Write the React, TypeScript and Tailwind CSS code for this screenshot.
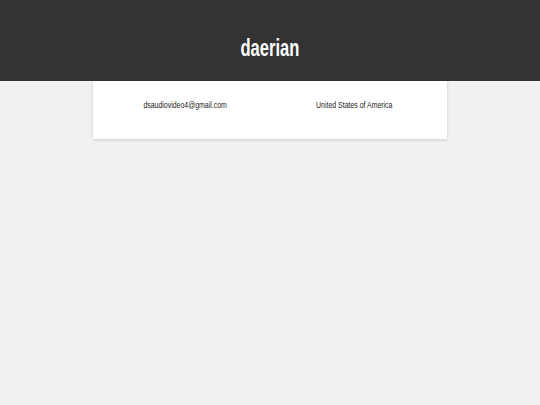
export default function App() {
  return (
    <div className="min-h-[405px] w-full bg-[#f1f1f1]" style={{ fontFamily: '"Liberation Sans", Arial, sans-serif' }}>
      <header className="flex h-[81px] items-start justify-center bg-[#333333] pt-[35px]">
        <h1 className="inline-block scale-x-[0.72] text-[23px] font-bold leading-[26px] text-white">daerian</h1>
      </header>
      <div className="mx-auto flex h-[58px] w-[354px] items-start bg-white pt-[17px] shadow-[0_1px_3px_rgba(0,0,0,0.15)]">
        <div className="flex flex-1 justify-center pl-[8px]">
          <span className="inline-block scale-x-[0.73] text-[9.5px] leading-[13px] text-[#222]">dsaudiovideo4@gmail.com</span>
        </div>
        <div className="flex flex-1 justify-center pr-[8px]">
          <span className="inline-block scale-x-[0.73] text-[9.5px] leading-[13px] text-[#222]">United States of America</span>
        </div>
      </div>
    </div>
  )
}
